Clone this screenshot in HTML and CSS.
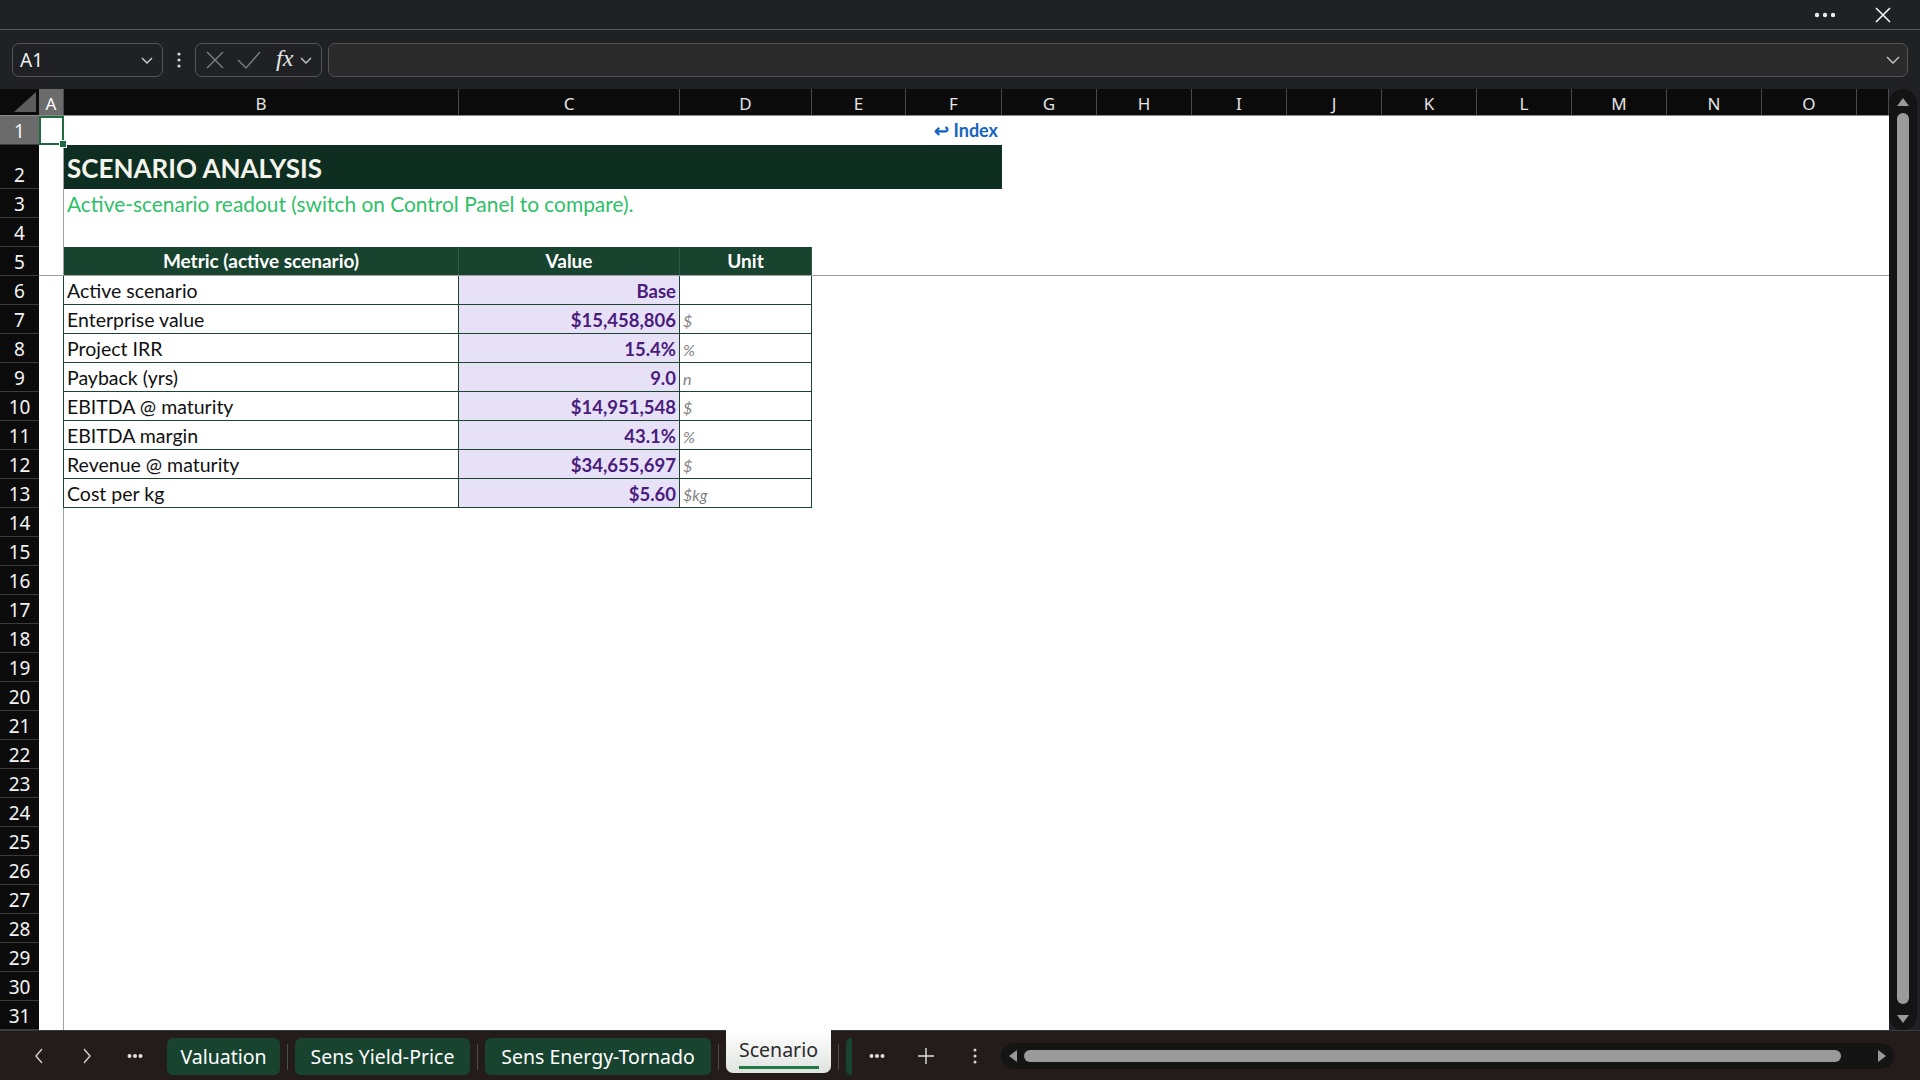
FILE: index.html
```html
<!DOCTYPE html>
<html lang="en">
<head>
  <meta charset="UTF-8" />
  <title>Scenario - Workbook</title>
  <link rel="stylesheet" href="styles.css">
</head>
<body>
<div class="app">
  <div class="titlebar">
    <svg class="more" width="22" height="6" viewBox="0 0 22 6"><circle cx="3" cy="3" r="2.2" fill="#ececec"/><circle cx="11" cy="3" r="2.2" fill="#ececec"/><circle cx="19" cy="3" r="2.2" fill="#ececec"/></svg>
    <svg class="close" width="18" height="18" viewBox="0 0 18 18"><path d="M2 2 L16 16 M16 2 L2 16" stroke="#f2f2f2" stroke-width="1.6" fill="none"/></svg>
  </div>

  <div class="formulabar">
    <div class="namebox">
      <span>A1</span>
      <svg width="14" height="14" viewBox="0 0 14 14"><path d="M2 5 L7 10 L12 5" stroke="#d0d0d0" stroke-width="1.4" fill="none"/></svg>
    </div>
    <svg class="vdots" width="6" height="18" viewBox="0 0 6 18"><circle cx="3" cy="3" r="1.6" fill="#d8d8d8"/><circle cx="3" cy="9" r="1.6" fill="#d8d8d8"/><circle cx="3" cy="15" r="1.6" fill="#d8d8d8"/></svg>
    <div class="fxgroup">
      <svg width="22" height="22" viewBox="0 0 22 22"><path d="M3 3 L19 19 M19 3 L3 19" stroke="#7a7a7a" stroke-width="1.5" fill="none"/></svg>
      <svg width="26" height="22" viewBox="0 0 26 22"><path d="M2 11 L10 19 L24 3" stroke="#7a7a7a" stroke-width="1.5" fill="none"/></svg>
      <span class="fx">fx</span>
      <svg width="14" height="14" viewBox="0 0 14 14"><path d="M2 5 L7 10 L12 5" stroke="#c8c8c8" stroke-width="1.4" fill="none"/></svg>
    </div>
    <div class="formula-input">
      <svg width="16" height="16" viewBox="0 0 16 16"><path d="M2 5 L8 11 L14 5" stroke="#c8c8c8" stroke-width="1.4" fill="none"/></svg>
    </div>
  </div>

  <div class="main">
    <div class="sheet">
      <div class="colheads">
        <div class="corner"><svg width="22" height="20" viewBox="0 0 22 20"><path d="M22 0 L22 20 L0 20 Z" fill="#5c5c5c"/></svg></div>
        <div class="ch sel">A</div>
        <div class="ch">B</div>
        <div class="ch">C</div>
        <div class="ch">D</div>
        <div class="ch">E</div>
        <div class="ch">F</div>
        <div class="ch">G</div>
        <div class="ch">H</div>
        <div class="ch">I</div>
        <div class="ch">J</div>
        <div class="ch">K</div>
        <div class="ch">L</div>
        <div class="ch">M</div>
        <div class="ch">N</div>
        <div class="ch">O</div>
        <div class="ch"></div>
      </div>

      <div class="body">
        <div class="rownums" id="rownums"></div>

        <div class="cells">
          <div class="row">
            <div class="a active-cell"></div>
            <div class="link">↩ Index</div>
          </div>
          <div class="row r-title">
            <div class="a"></div>
            <div class="title">SCENARIO ANALYSIS</div>
          </div>
          <div class="row">
            <div class="a"></div>
            <div class="subtitle">Active-scenario readout (switch on Control Panel to compare).</div>
          </div>
          <div class="row"><div class="a"></div></div>
          <div class="row freeze">
            <div class="a"></div>
            <div class="th first">Metric (active scenario)</div>
            <div class="th">Value</div>
            <div class="th">Unit</div>
          </div>
          <div class="row">
            <div class="a"></div>
            <div class="td label">Active scenario</div>
            <div class="td val">Base</div>
            <div class="td unit"></div>
          </div>
          <div class="row">
            <div class="a"></div>
            <div class="td label">Enterprise value</div>
            <div class="td val">$15,458,806</div>
            <div class="td unit">$</div>
          </div>
          <div class="row">
            <div class="a"></div>
            <div class="td label">Project IRR</div>
            <div class="td val">15.4%</div>
            <div class="td unit">%</div>
          </div>
          <div class="row">
            <div class="a"></div>
            <div class="td label">Payback (yrs)</div>
            <div class="td val">9.0</div>
            <div class="td unit">n</div>
          </div>
          <div class="row">
            <div class="a"></div>
            <div class="td label">EBITDA @ maturity</div>
            <div class="td val">$14,951,548</div>
            <div class="td unit">$</div>
          </div>
          <div class="row">
            <div class="a"></div>
            <div class="td label">EBITDA margin</div>
            <div class="td val">43.1%</div>
            <div class="td unit">%</div>
          </div>
          <div class="row">
            <div class="a"></div>
            <div class="td label">Revenue @ maturity</div>
            <div class="td val">$34,655,697</div>
            <div class="td unit">$</div>
          </div>
          <div class="row">
            <div class="a"></div>
            <div class="td label">Cost per kg</div>
            <div class="td val">$5.60</div>
            <div class="td unit">$kg</div>
          </div>
          <div id="emptyRows"></div>
        </div>
      </div>
    </div>

    <div class="vscroll">
      <div class="vtrack">
        <svg class="arrow" width="14" height="10" viewBox="0 0 14 10"><path d="M7 1 L13 9 L1 9 Z" fill="#9a9a9a"/></svg>
        <div class="vthumb"></div>
        <svg class="arrow" width="14" height="10" viewBox="0 0 14 10"><path d="M1 1 L13 1 L7 9 Z" fill="#9a9a9a"/></svg>
      </div>
    </div>
  </div>

  <div class="tabbar">
    <div class="nav"><svg width="12" height="18" viewBox="0 0 12 18"><path d="M9 2 L3 9 L9 16" stroke="#d0d0d0" stroke-width="1.4" fill="none"/></svg></div>
    <div class="nav"><svg width="12" height="18" viewBox="0 0 12 18"><path d="M3 2 L9 9 L3 16" stroke="#d0d0d0" stroke-width="1.4" fill="none"/></svg></div>
    <div class="nav"><svg width="16" height="6" viewBox="0 0 16 6"><circle cx="2.5" cy="3" r="2" fill="#e0e0e0"/><circle cx="8" cy="3" r="2" fill="#e0e0e0"/><circle cx="13.5" cy="3" r="2" fill="#e0e0e0"/></svg></div>
    <div class="tab t1">Valuation</div>
    <div class="sep"></div>
    <div class="tab t2">Sens Yield-Price</div>
    <div class="sep"></div>
    <div class="tab t3">Sens Energy-Tornado</div>
    <div class="sep"></div>
    <div class="tab active">Scenario</div>
    <div class="sep"></div>
    <div class="tab-peek"></div>
    <div class="nav small"><svg width="16" height="6" viewBox="0 0 16 6"><circle cx="2.5" cy="3" r="2" fill="#e0e0e0"/><circle cx="8" cy="3" r="2" fill="#e0e0e0"/><circle cx="13.5" cy="3" r="2" fill="#e0e0e0"/></svg></div>
    <div class="nav small"><svg width="18" height="18" viewBox="0 0 18 18"><path d="M9 1 L9 17 M1 9 L17 9" stroke="#e0e0e0" stroke-width="1.4" fill="none"/></svg></div>
    <div class="nav small"><svg width="6" height="18" viewBox="0 0 6 18"><circle cx="3" cy="3" r="1.5" fill="#d8d8d8"/><circle cx="3" cy="9" r="1.5" fill="#d8d8d8"/><circle cx="3" cy="15" r="1.5" fill="#d8d8d8"/></svg></div>
    <div class="hscroll">
      <svg width="10" height="14" viewBox="0 0 10 14"><path d="M9 1 L9 13 L1 7 Z" fill="#9a9a9a"/></svg>
      <div class="hthumb"></div>
      <svg width="10" height="14" viewBox="0 0 10 14"><path d="M1 1 L9 7 L1 13 Z" fill="#9a9a9a"/></svg>
    </div>
  </div>
</div>

<script>
  // row headers 1..31, row 1 is the selected row
  const nums = document.getElementById("rownums");
  for (let i = 1; i <= 31; i++) {
    const d = document.createElement("div");
    d.className = "rn" + (i === 1 ? " sel" : "") + (i === 2 ? " tall" : "");
    d.textContent = i;
    nums.appendChild(d);
  }
  // empty sheet rows 14..31
  const empty = document.getElementById("emptyRows");
  for (let i = 14; i <= 31; i++) {
    const r = document.createElement("div");
    r.className = "row";
    r.innerHTML = '<div class="a"></div>';
    empty.appendChild(r);
  }
</script>
</body>
</html>
```

FILE: styles.css
```css
* {
  box-sizing: border-box;
}
body {
  margin: 0;
  background: #1f2125;
  font-family: 'Noto Sans', sans-serif;
  overflow: hidden;
}
.app {
  width: 1920px;
  height: 1080px;
  display: flex;
  flex-direction: column;
}

/* title bar */
.titlebar {
  height: 30px;
  border-bottom: 1px solid #5a5a5a;
  display: flex;
  align-items: center;
  justify-content: flex-end;
  padding-right: 28px;
  gap: 38px;
}

/* formula bar */
.formulabar {
  height: 59px;
  display: flex;
  align-items: center;
  padding: 0 12px;
}
.namebox {
  width: 151px;
  height: 34px;
  border: 1px solid #555;
  border-radius: 7px;
  display: flex;
  align-items: center;
  justify-content: space-between;
  padding: 0 8px 0 7px;
  color: #f0f0f0;
  font-size: 19px;
}
.vdots {
  margin: 0 13px;
}
.fxgroup {
  width: 127px;
  height: 34px;
  border: 1px solid #555;
  border-radius: 7px;
  display: flex;
  align-items: center;
  padding: 0 4px 0 8px;
  gap: 10px;
}
.fx {
  font-family: 'Liberation Serif', serif;
  font-style: italic;
  font-size: 24px;
  color: #e8e8e8;
  margin-left: 4px;
  margin-right: -4px;
  margin-top: -3px;
}
.formula-input {
  flex: 1;
  height: 34px;
  margin-left: 6px;
  border: 1px solid #555;
  border-radius: 7px;
  background: #2a2a2a;
  display: flex;
  align-items: center;
  justify-content: flex-end;
  padding-right: 6px;
}

/* sheet */
.main {
  height: 941px;
  display: flex;
}
.sheet {
  width: 1889px;
  background: #fff;
}
.colheads {
  height: 27px;
  display: grid;
  grid-template-columns: 39px 25px 395px 221px 132px 94px 96px repeat(9, 95px) 32px;
  background: #0b0b0b;
  border-bottom: 1px solid #8a8a8a;
}
.corner {
  display: flex;
  align-items: flex-end;
  justify-content: flex-end;
  padding: 0 3px 3px 0;
}
.ch {
  border-right: 1px solid #4a4a4a;
  color: #e4e4e4;
  font-size: 17px;
  display: flex;
  align-items: center;
  justify-content: center;
  padding-top: 2px;
}
.ch.sel {
  background: #6b6b6b;
  color: #fff;
}
.body {
  display: flex;
}
.rownums {
  width: 39px;
  background: #0b0b0b;
}
.rn {
  height: 29px;
  border-bottom: 1px solid #3c3c3c;
  color: #f4f4f4;
  font-size: 19px;
  display: flex;
  align-items: flex-end;
  justify-content: center;
}
.rn.sel {
  background: #6b6b6b;
}
.rn.tall {
  height: 44px;
}
.cells {
  flex: 1;
  font-family: 'Lato', sans-serif;
  font-size: 19.5px;
}
.row {
  height: 29px;
  display: grid;
  grid-template-columns: 25px 395px 221px 132px 94px 96px repeat(9, 95px) 32px;
}
.row.r-title {
  height: 44px;
}
.row.freeze {
  border-bottom: 1px solid #a0a0a0;
}
.a {
  grid-column: 1;
  border-right: 1px solid #a0a0a0;
}
.active-cell {
  position: relative;
  border: 2px solid #1e6b40;
}
.active-cell::after {
  content: "";
  position: absolute;
  right: -5px;
  bottom: -5px;
  width: 6px;
  height: 6px;
  background: #1e6b40;
  border: 1px solid #fff;
}
.link {
  grid-column: 6;
  text-align: right;
  padding: 3px 4px 0 0;
  color: #1565c0;
  font-weight: bold;
  font-size: 18px;
  white-space: nowrap;
}
.title {
  grid-column: 2 / 7;
  background: #0d2e20;
  color: #f4f4ec;
  font-weight: bold;
  font-size: 26px;
  display: flex;
  align-items: center;
  padding: 2px 0 0 3px;
}
.subtitle {
  grid-column: 2 / 10;
  color: #2fbf68;
  font-size: 20.9px;
  padding: 2px 0 0 3px;
  white-space: nowrap;
}
.th {
  background: #17432f;
  color: #fff;
  font-weight: bold;
  font-size: 19px;
  text-align: center;
  padding-top: 2px;
  border-right: 1px solid #2c5a44;
}
.th.first {
  grid-column: 2;
}
.td {
  border-right: 1px solid #1c4430;
  border-bottom: 1px solid #1c4430;
  padding: 3px 3px 0;
  white-space: nowrap;
  color: #111;
}
.td.label {
  grid-column: 2;
  border-left: 1px solid #1c4430;
  margin-left: -1px;
}
.td.val {
  background: #e7e1f7;
  color: #4a1c7c;
  font-weight: bold;
  font-size: 18.5px;
  text-align: right;
  padding-top: 4px;
}
.td.unit {
  color: #7f7f7f;
  font-style: italic;
  font-size: 16px;
  padding-top: 6px;
}

/* vertical scroll */
.vscroll {
  width: 31px;
  padding: 0 3px 0 0;
}
.vtrack {
  height: 100%;
  background: #141414;
  border-radius: 14px;
  display: flex;
  flex-direction: column;
  align-items: center;
  padding: 8px 0 6px;
}
.vthumb {
  flex: 1;
  width: 12px;
  margin: 6px 0 10px;
  background: #9a9a9a;
  border-radius: 6px;
}

/* sheet tabs */
.tabbar {
  height: 50px;
  background: #241b1b;
  border-top: 1px solid #3a3a3a;
  display: flex;
  align-items: center;
  padding-left: 15px;
}
.nav {
  width: 48px;
  height: 36px;
  display: flex;
  align-items: center;
  justify-content: center;
}
.nav.small {
  width: 49px;
}
.tab {
  height: 37px;
  margin-top: 2px;
  background: #17432f;
  color: #fff;
  font-size: 19.5px;
  border-radius: 6px;
  display: flex;
  align-items: center;
  justify-content: center;
}
.t1 {
  width: 113px;
  margin-left: 8px;
}
.t2 {
  width: 175px;
}
.t3 {
  width: 226px;
}
.sep {
  width: 1px;
  height: 26px;
  margin: 2px 7px 0;
  background: #4c4c4c;
}
.tab.active {
  width: 105px;
  height: 43px;
  margin-top: -8px;
  border-radius: 0 0 7px 7px;
  background: linear-gradient(#ffffff, #dfe4df);
  color: #2a2a2a;
  flex-direction: column;
  justify-content: flex-start;
  padding-top: 6px;
}
.tab.active::after {
  content: "";
  width: 80px;
  height: 3px;
  margin-top: 3px;
  background: #1f7a46;
}
.tab-peek {
  width: 6px;
  height: 37px;
  margin-top: 2px;
  background: #17432f;
  border-radius: 5px 0 0 5px;
}
.hscroll {
  width: 893px;
  height: 26px;
  margin-left: 2px;
  background: #141414;
  border-radius: 13px;
  display: flex;
  align-items: center;
  padding: 0 7px;
  gap: 6px;
}
.hthumb {
  flex: 1;
  height: 12px;
  background: #9a9a9a;
  border-radius: 6px;
  margin-right: 30px;
}
```
